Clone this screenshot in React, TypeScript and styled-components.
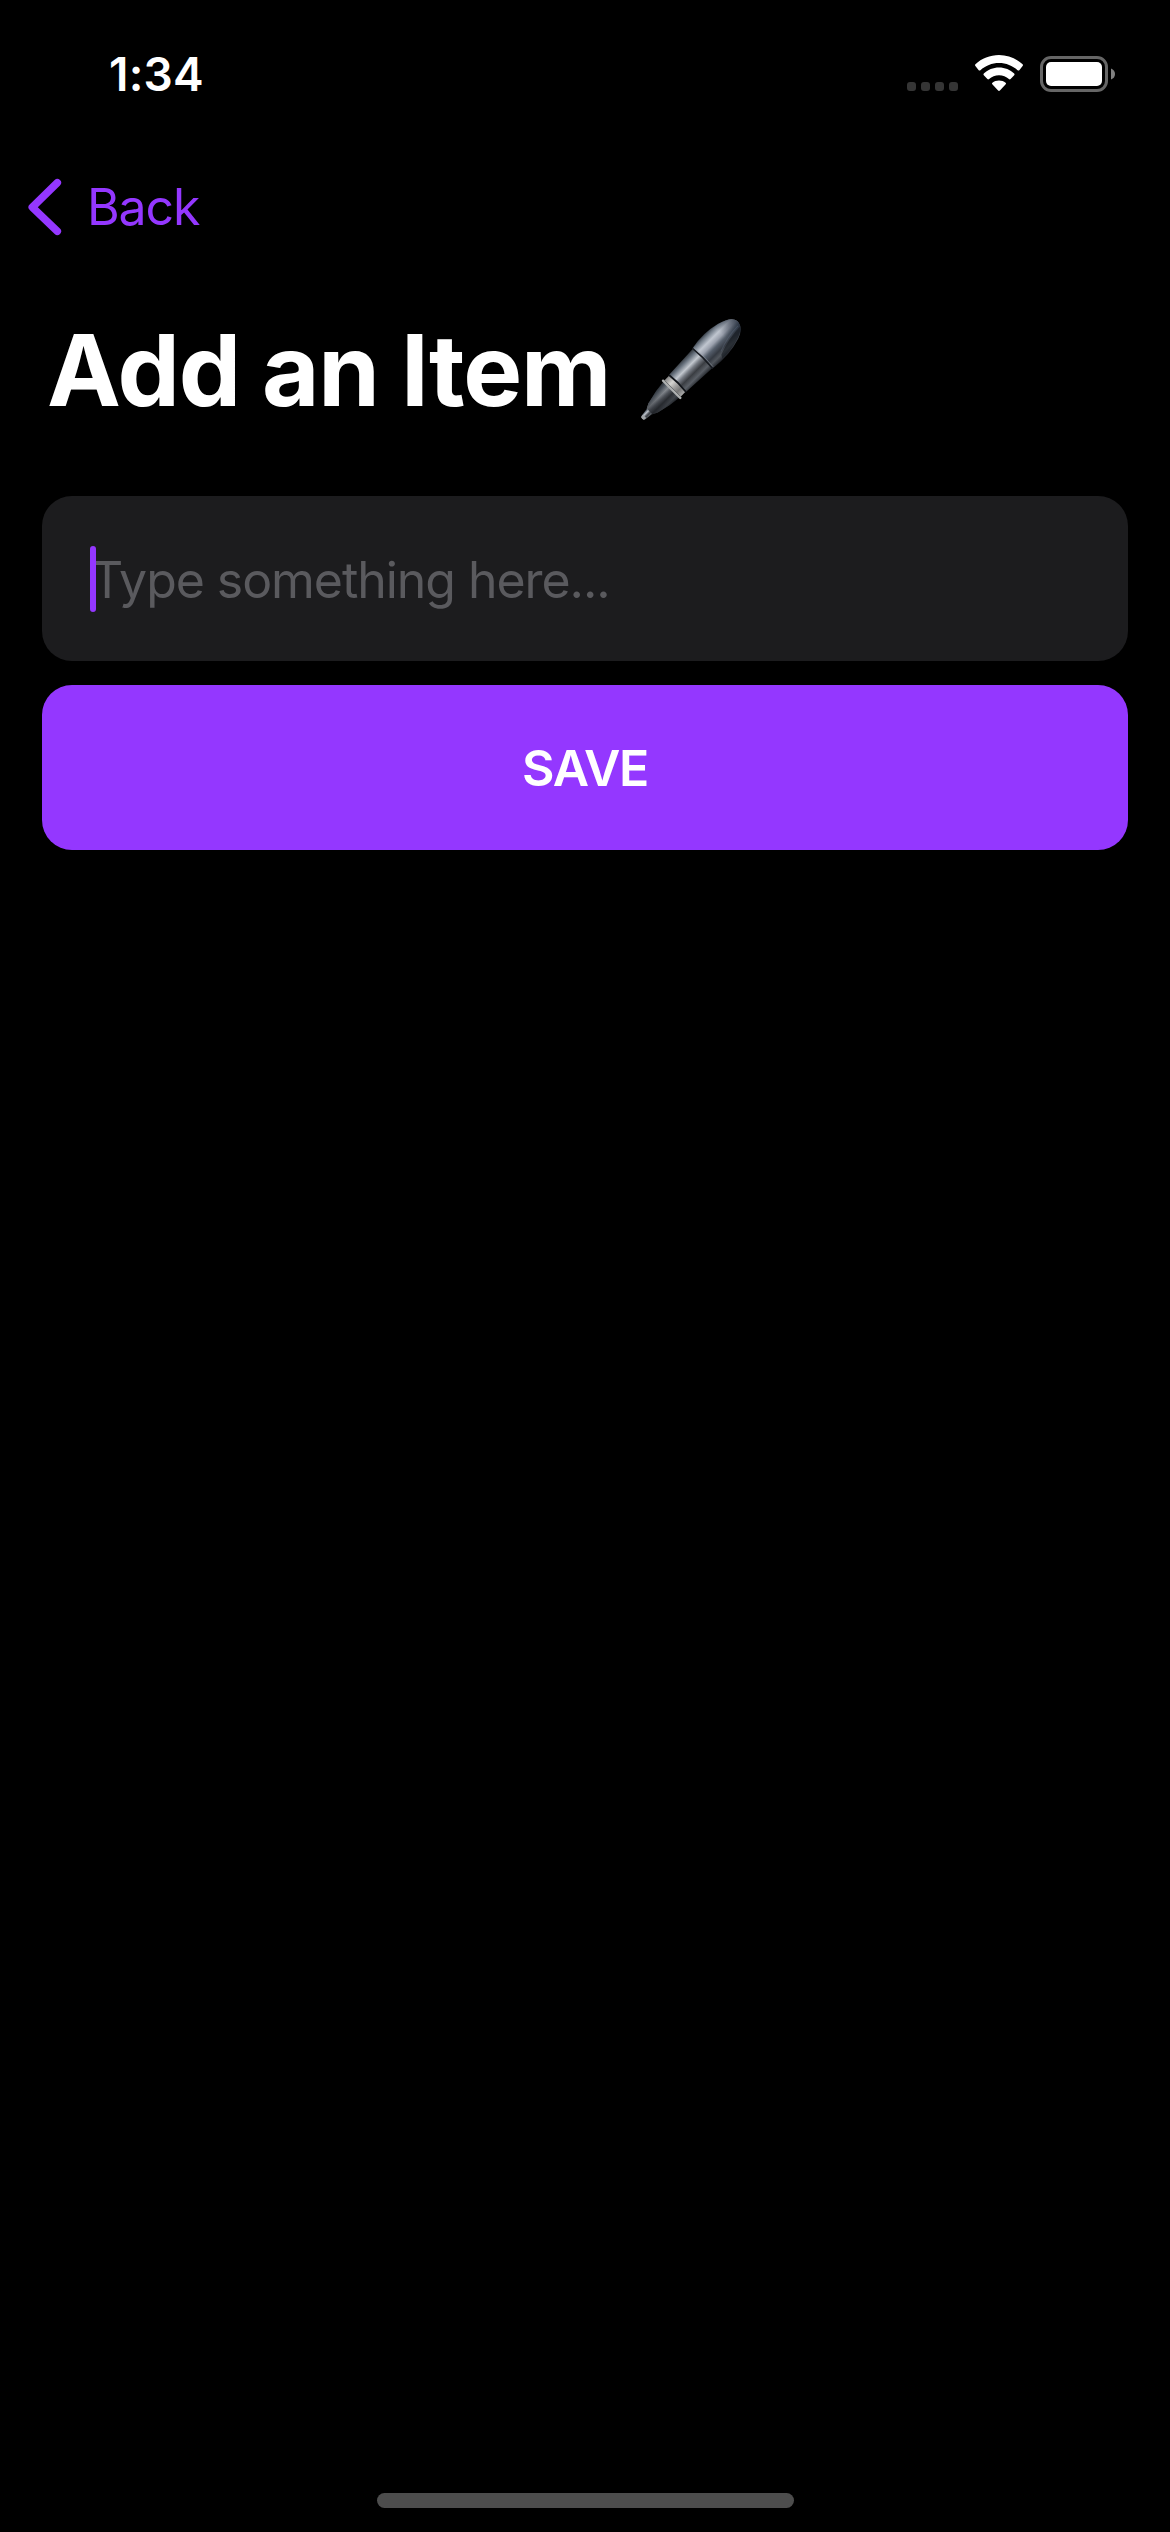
import React from "react";
import styled, { createGlobalStyle } from "styled-components";

const accent = "#9437ff";

const GlobalStyle = createGlobalStyle`
  body { margin: 0; background: #000; }
  * { box-sizing: border-box; }
`;

const Screen = styled.main`
  width: 1170px;
  height: 2532px;
  display: flex;
  flex-direction: column;
  background: #000;
  color: #fff;
  font-family: Inter, "Liberation Sans", sans-serif;
  overflow: hidden;
`;

const StatusBar = styled.header`
  height: 141px;
  padding: 55px 55px 0 109px;
  display: flex;
  justify-content: space-between;
  align-items: flex-start;
`;

const Time = styled.time`
  font-size: 46px;
  font-weight: 600;
  line-height: 39px;
  letter-spacing: 0.2px;
`;

const StatusIcons = styled.div`
  display: flex;
  align-items: flex-start;
`;

const CellDots = styled.div`
  display: flex;
  gap: 5px;
  margin: 27px 17px 0 0;
`;

const CellDot = styled.i`
  width: 9px;
  height: 9px;
  border-radius: 3px;
  background: #353535;
`;

const WifiIcon = styled.svg`
  width: 48px;
  height: 37px;
  margin-right: 17px;
`;

const BatteryIcon = styled.svg`
  width: 75px;
  height: 38px;
`;

const NavBar = styled.nav`
  height: 132px;
  padding-left: 27px;
  display: flex;
  align-items: center;
`;

const BackButton = styled.button`
  display: flex;
  align-items: center;
  gap: 25px;
  padding: 0;
  border: 0;
  background: none;
  color: ${accent};
  font: 400 50px/60px Inter, "Liberation Sans", sans-serif;
  letter-spacing: -1.1px;
`;

const ChevronIcon = styled.svg`
  width: 35px;
  height: 58px;
`;

const TitleRow = styled.div`
  height: 223px;
  padding: 45px 0 0 47px;
  display: flex;
  align-items: flex-start;
`;

const Title = styled.h1`
  margin: 0;
  width: 593px;
  font-size: 99px;
  font-weight: 700;
  line-height: 104px;
  letter-spacing: -1.2px;
  white-space: nowrap;
`;

const PenIcon = styled.svg`
  width: 104px;
  height: 104px;
`;

const Form = styled.form`
  padding: 0 42px;
  display: flex;
  flex-direction: column;
  gap: 24px;
`;

const Field = styled.div`
  position: relative;
  height: 165px;
  padding: 3px 48px 0 49px;
  display: flex;
  align-items: center;
  border-radius: 30px;
  background: #1c1c1e;
`;

const Placeholder = styled.span`
  color: #5a5a5e;
  font-size: 50px;
  font-weight: 400;
  line-height: 60px;
  letter-spacing: -1.05px;
`;

const Caret = styled.i`
  position: absolute;
  left: 48px;
  top: 50px;
  width: 6px;
  height: 66px;
  border-radius: 3px;
  background: ${accent};
`;

const SaveButton = styled.button`
  height: 165px;
  padding: 0;
  border: 0;
  border-radius: 30px;
  background: ${accent};
  color: #fff;
  font: 600 50px/60px Inter, "Liberation Sans", sans-serif;
  letter-spacing: -1.3px;
`;

const HomeArea = styled.footer`
  margin-top: auto;
  padding-bottom: 24px;
  display: flex;
  justify-content: center;
`;

const HomeIndicator = styled.div`
  width: 417px;
  height: 15px;
  border-radius: 8px;
  background: #4d4d4d;
`;

function Wifi() {
  return (
    <WifiIcon viewBox="0 0 48 37" fill="#fff">
      <path d="M24 0C33 0 41.300 3.500 47.600 9.200Q48.400 10.100 47.600 11L44.300 15.200Q43.500 16 42.600 15.200C37.500 10.700 31.100 8 24 8S10.500 10.700 5.400 15.200Q4.500 16 3.700 15.200L.4 11Q-.4 10.100 .4 9.200C6.700 3.500 15 0 24 0Z" />
      <path d="M24 12.600C29.900 12.600 35.200 14.900 39.200 18.600Q40 19.500 39.200 20.300L35.600 24Q34.800 24.800 33.900 24C31.300 21.700 27.800 20.300 24 20.300S16.700 21.700 14.100 24Q13.200 24.800 12.400 24L8.800 20.300Q8 19.500 8.800 18.600C12.800 14.900 18.100 12.600 24 12.600Z" />
      <path d="M24 25.500C26.500 25.500 28.800 26.300 30.600 27.700Q31.500 28.500 30.700 29.300L24.900 35.500Q24 36.400 23.100 35.500L17.300 29.300Q16.500 28.500 17.400 27.700C19.200 26.300 21.500 25.500 24 25.500Z" />
    </WifiIcon>
  );
}

function Battery() {
  return (
    <BatteryIcon viewBox="0 0 75 38">
      <rect x="1.500" y="2.500" width="65" height="33" rx="9.500" fill="none" stroke="#666" strokeWidth="3" />
      <rect x="6" y="7" width="56" height="24" rx="5" fill="#fff" />
      <path d="M71 13.500Q75 15 75 19T71 24.500Z" fill="#808080" />
    </BatteryIcon>
  );
}

function Pen() {
  return (
    <PenIcon viewBox="0 0 104 104" role="img" aria-label="Pen">
      <defs>
        <linearGradient id="cap" x1="0" y1="0" x2="0" y2="1">
          <stop offset="0" stopColor="#3a414b" />
          <stop offset=".1" stopColor="#727c88" />
          <stop offset=".27" stopColor="#c0c6d0" />
          <stop offset=".42" stopColor="#9ba1ad" />
          <stop offset=".55" stopColor="#555e6b" />
          <stop offset=".72" stopColor="#353a42" />
          <stop offset=".85" stopColor="#50555c" />
          <stop offset="1" stopColor="#202329" />
        </linearGradient>
        <linearGradient id="barrel" x1="0" y1="0" x2="0" y2="1">
          <stop offset="0" stopColor="#30353b" />
          <stop offset=".15" stopColor="#67717d" />
          <stop offset=".35" stopColor="#c3c8cf" />
          <stop offset=".48" stopColor="#777c84" />
          <stop offset=".65" stopColor="#3a3d42" />
          <stop offset=".83" stopColor="#5a5f66" />
          <stop offset="1" stopColor="#23262b" />
        </linearGradient>
        <linearGradient id="ring" x1="0" y1="0" x2="0" y2="1">
          <stop offset="0" stopColor="#858585" />
          <stop offset=".3" stopColor="#d5d4d1" />
          <stop offset=".55" stopColor="#9c9b9a" />
          <stop offset=".75" stopColor="#777" />
          <stop offset="1" stopColor="#aaa" />
        </linearGradient>
        <linearGradient id="shade" x1="0" y1="0" x2="1" y2="0">
          <stop offset=".6" stopColor="#1c2534" stopOpacity="0" />
          <stop offset="1" stopColor="#1c2534" stopOpacity=".7" />
        </linearGradient>
        <linearGradient id="nose" x1="0" y1="0" x2="1" y2="0">
          <stop offset="0" stopColor="#101318" stopOpacity=".6" />
          <stop offset="1" stopColor="#101318" stopOpacity=".3" />
        </linearGradient>
      </defs>
      <g transform="translate(2.500 100.500) rotate(-45)">
        <path d="M1-2.500Q-1.500 0 1 2.500L11 4V-4Z" fill="url(#barrel)" />
        <path d="M0-2Q-1.200 0 0 2L3 2.300V-2.300Z" fill="#a0a4a8" />
        <path d="M10-4L15-6.500Q29-10.500 43-11.500V11.500Q29 10.500 15 6.500L10 4Z" fill="url(#barrel)" />
        <path d="M10-4L15-6.500Q29-10.500 43-11.500V11.500Q29 10.500 15 6.500L10 4Z" fill="url(#nose)" />
        <rect x="42" y="-11.500" width="8" height="23" fill="url(#ring)" />
        <rect x="40" y="-13.400" width="2.500" height="26.800" rx="1.200" fill="#aeb0b0" />
        <path d="M42.500-11.500V11.500" stroke="#53565a" strokeWidth=".7" />
        <path d="M49-12L86-13.800V13.800L49 12Q50.500 0 49-12Z" fill="url(#barrel)" />
        <path d="M49.500-12Q51 0 49.500 12" fill="none" stroke="#111419" strokeWidth="1.800" />
        <path d="M85-14.200Q103-18 120-13.500Q135-9.500 136-2Q136 7 124 11.200Q107 17 85 14.200Z" fill="url(#cap)" />
        <path d="M85-14.200Q103-18 120-13.500Q135-9.500 136-2Q136 7 124 11.200Q107 17 85 14.200Z" fill="url(#shade)" />
        <path d="M101 10.500Q119 4 134 4Q131 8.500 123 10.800Q111 14.500 99 14Z" fill="#171b22" opacity=".65" />
        <path d="M103 8Q118 2 133 2" fill="none" stroke="#5d6a7e" strokeWidth="1" opacity=".4" />
        <path d="M85-14.200Q86.500 0 85 14.200" fill="none" stroke="#171a20" strokeWidth="1.500" />
        <path d="M86.500-13.500Q88 0 86.500 13.500" fill="none" stroke="#929ba7" strokeWidth=".6" opacity=".7" />
      </g>
    </PenIcon>
  );
}

export default function App() {
  return (
    <>
      <GlobalStyle />
      <Screen>
        <StatusBar>
          <Time>1:34</Time>
          <StatusIcons>
            <CellDots>
              {[0, 1, 2, 3].map((dot) => <CellDot key={dot} />)}
            </CellDots>
            <Wifi />
            <Battery />
          </StatusIcons>
        </StatusBar>
        <NavBar>
          <BackButton type="button">
            <ChevronIcon viewBox="0 0 35 58">
              <path d="M30.300 4.700L5.300 29.200L30.300 53.300" fill="none" stroke={accent} strokeWidth="7.600" strokeLinecap="round" strokeLinejoin="round" />
            </ChevronIcon>
            <span>Back</span>
          </BackButton>
        </NavBar>
        <TitleRow>
          <Title>Add an Item</Title>
          <Pen />
        </TitleRow>
        <Form>
          <Field>
            <Placeholder>Type something here...</Placeholder>
            <Caret />
          </Field>
          <SaveButton type="button">SAVE</SaveButton>
        </Form>
        <HomeArea>
          <HomeIndicator />
        </HomeArea>
      </Screen>
    </>
  );
}
